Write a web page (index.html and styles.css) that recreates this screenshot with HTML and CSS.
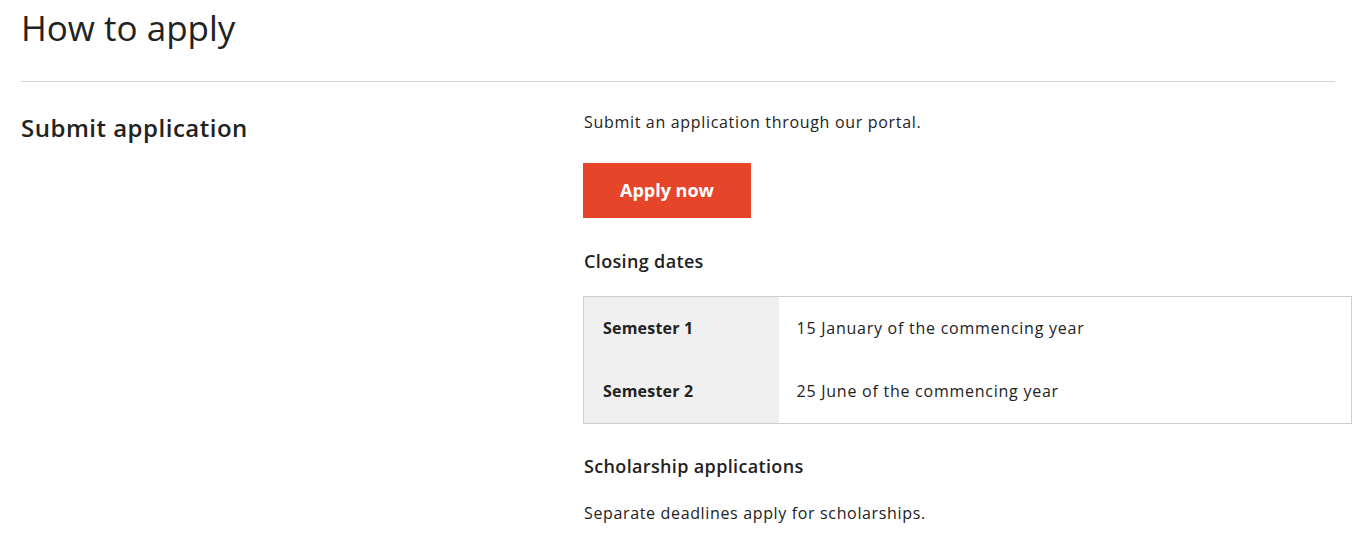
FILE: index.html
```html
<!DOCTYPE html>
<html lang="en">
<head>
<meta charset="utf-8">
<title>How to apply</title>
<link rel="stylesheet" href="styles.css">
</head>
<body>
<main class="page">
  <h1 class="title">How to apply</h1>
  <hr class="rule">
  <section class="row">
    <h2 class="row-title">Submit application</h2>
    <div class="row-body">
      <p class="text">Submit an application through our portal.</p>
      <a class="btn" href="#">Apply now</a>
      <h3 class="sub">Closing dates</h3>
      <table class="dates">
        <tr><th>Semester 1</th><td>15 January of the commencing year</td></tr>
        <tr class="last"><th>Semester 2</th><td>25 June of the commencing year</td></tr>
      </table>
      <h3 class="sub sub-2">Scholarship applications</h3>
      <p class="text text-2">Separate deadlines apply for scholarships.</p>
    </div>
  </section>
</main>
</body>
</html>
```
FILE: styles.css
```css
* { box-sizing: border-box; }
html, body { margin: 0; padding: 0; background: #fff; }
body {
  font-family: "Open Sans", "Noto Sans", sans-serif;
  color: #222;
}
.page { padding: 0 29px 0 21px; }
.title {
  margin: 0;
  padding-top: 6px;
  font-size: 35px;
  font-weight: 400;
  line-height: 44px;
}
.rule {
  margin: 31px 0 0 0;
  border: 0;
  border-top: 1px solid #d4d4d4;
  width: 1314px;
}
.row {
  display: grid;
  grid-template-columns: 562px 1fr;
  padding-top: 27px;
}
.row-title {
  margin: 0;
  font-size: 24px;
  font-weight: 600;
  line-height: 38px;
  letter-spacing: 0.5px;
}
.row-body { margin-right: -17px; }
.text {
  margin: 0;
  font-size: 16px;
  line-height: 26px;
  padding-left: 1px;
  letter-spacing: 0.68px;
}
.btn {
  display: inline-block;
  margin-top: 28px;
  width: 168px;
  height: 55px;
  background: #e64529;
  color: #fff;
  font-weight: 700;
  font-size: 18px;
  line-height: 55px;
  text-align: center;
  text-decoration: none;
}
.sub {
  margin: 24px 0 0 0;
  padding-left: 1px;
  font-size: 18px;
  font-weight: 600;
  line-height: 38px;
  letter-spacing: 0.35px;
}
.dates {
  margin-top: 16px;
  width: 100%;
  border-collapse: collapse;
  border: 1px solid #cfcfcf;
  font-size: 16px;
  letter-spacing: 0.75px;
}
.dates th {
  width: 195px;
  background: #f0f0f0;
  text-align: left;
  font-weight: 700;
  padding: 0 19px;
  height: 63px;
  letter-spacing: 0.2px;
}
.dates td {
  padding: 0 18px;
  height: 63px;
}
.dates .last th, .dates .last td { height: 64px; }
.sub-2 { margin-top: 23px; }
.text-2 { margin-top: 15px; letter-spacing: 0.65px; }
```
